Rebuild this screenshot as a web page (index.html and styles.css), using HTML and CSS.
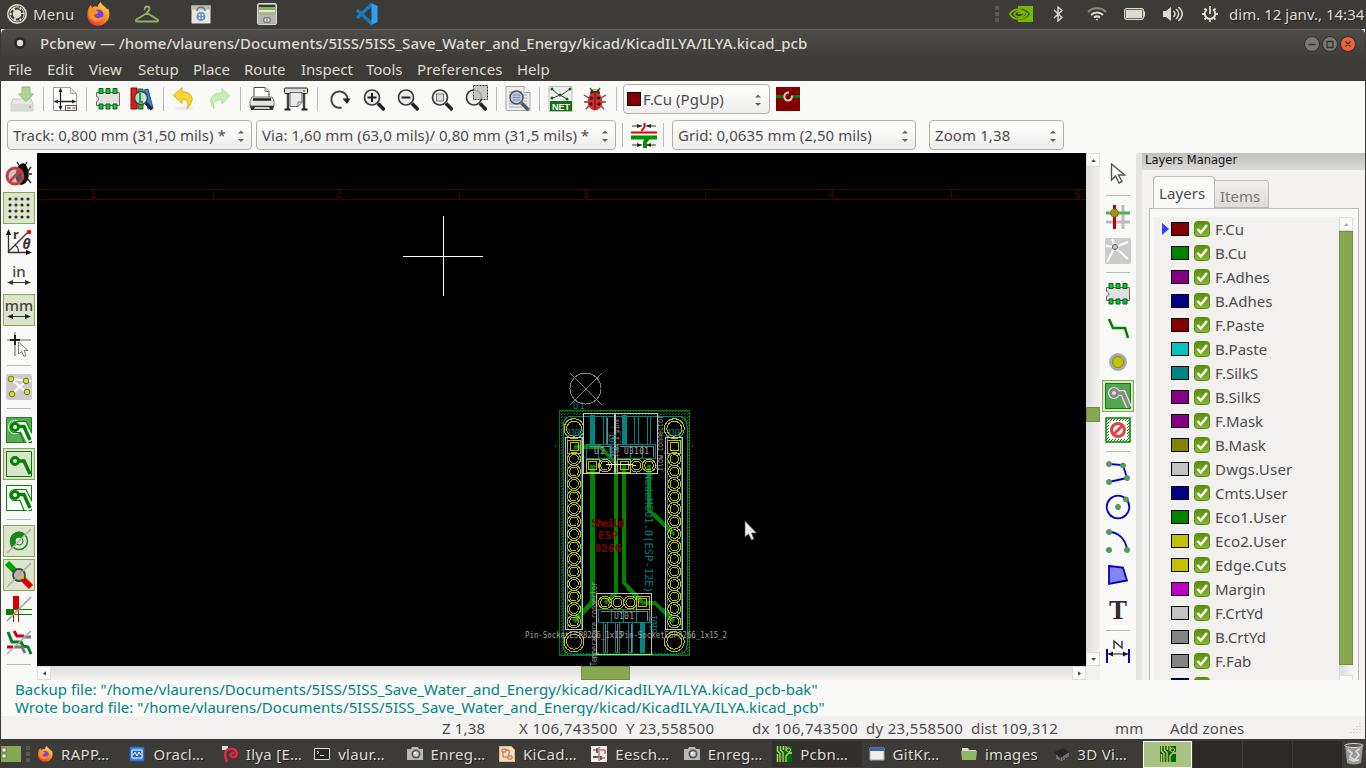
FILE: index.html
```html
<!DOCTYPE html>
<html lang="en">
<head>
<meta charset="utf-8">
<title>Pcbnew</title>
<link rel="stylesheet" href="styles.css">
</head>
<body>
<svg class="defs" width="0" height="0">
  <defs>
    <linearGradient id="ff" x1="0.8" y1="0" x2="0.2" y2="1"><stop offset="0" stop-color="#ffe14a"/><stop offset=".5" stop-color="#ff8a1e"/><stop offset="1" stop-color="#f0264e"/></linearGradient>
    <linearGradient id="ck" x1="0" y1="0" x2="0" y2="1"><stop offset="0" stop-color="#5a900c"/><stop offset="1" stop-color="#86b835"/></linearGradient>
    <pattern id="hatch" width="3" height="3" patternUnits="userSpaceOnUse"><path d="M0 3L3 0" stroke="#008400" stroke-width="1"/></pattern>
    <pattern id="dots" width="3" height="3" patternUnits="userSpaceOnUse"><rect width="1" height="1" fill="#008400"/><rect x="1" y="2" width="1" height="1" fill="#008400"/></pattern>
    <symbol id="firefox" viewBox="0 0 24 24"><path d="M2 8C3 5 4 4 5 3l1 3c2-2 4-2 6-1 0-2 1-4 3-5 0 3 4 4 6 7 1 1 1 0 1-1 3 7 1 13-4 16-5 3-12 2-15-3C1 16 1 12 2 8z" fill="url(#ff)"/><circle cx="12.500" cy="12.500" r="5" fill="#7542e5"/><path d="M3 9c3-2 5-1 8 0 2 1 1 3-1 3l-2 1c1 4 6 4 9 1-1 5-7 8-11 4-3-2-4-6-3-9z" fill="#ff9320"/></symbol>
    <symbol id="check" viewBox="0 0 16 16"><rect x=".5" y=".5" width="15" height="15" rx="3" fill="url(#ck)" stroke="#578a12"/><path d="M3.500 8l3.300 3.500L13 4" fill="none" stroke="#fff" stroke-width="2.400"/></symbol>
    <symbol id="lens" viewBox="0 0 24 24"><circle cx="11" cy="10.500" r="7.500" fill="#ececec" stroke="#3c3c3c" stroke-width="1.700"/><path d="M17 16.500l6.500 6.500" stroke="#222" stroke-width="3.600"/></symbol>
    <symbol id="chip" viewBox="0 0 24 24"><path d="M.500 5.500h23v13H.500v-4c3-1 3-4 0-5z" fill="#e0e0e0" stroke="#666"/><g fill="#0c3" stroke="#175417"><path d="M3 1.500h4v5H3zM10 1.500h4v5h-4zM17 1.500h4v5h-4zM3 17h4v5H3zM10 17h4v5h-4zM17 17h4v5h-4z"/></g></symbol>
    <symbol id="camera" viewBox="0 0 16 16"><path d="M0 3h4l1-2h6l1 2h4v11H0z" fill="#b9b9b5"/><circle cx="9" cy="8" r="4.500" fill="#555"/><circle cx="9" cy="8" r="2.800" fill="#c6cfd5"/><circle cx="8" cy="7" r="1" fill="#fff"/></symbol>
    <symbol id="pcb" viewBox="0 0 16 16"><path d="M0 0h16v16H0z" fill="#056b05"/><path d="M1.500 0v5L4 7.500V16M4.500 0v4L7 6.500V16M7.500 0v4M1.500 8v8M10 16v-6l3-3h3M10 0v5" fill="none" stroke="#d5c18d" stroke-width="1.300"/><circle cx="12.500" cy="4" r="2" fill="none" stroke="#d5c18d"/></symbol>
    <symbol id="zone" viewBox="0 0 26 26"><path d="M8 9h9l8 15" fill="none" stroke="#fff" stroke-width="9"/><circle cx="9" cy="10" r="7" fill="#fff"/><path d="M9 15.500c-7 0-7-11 0-11h11l6 12M9 15.500h5l4 9.500" fill="none" stroke="#008400" stroke-width="1.200"/><circle cx="9" cy="10" r="3.500" fill="none" stroke="#008400" stroke-width="3"/><path d="M12 9.500h6L24 23" fill="none" stroke="#008400" stroke-width="3.500"/></symbol>
    <symbol id="arrow" viewBox="0 0 16 22"><path d="M1.500 1v16l4-4 3.500 7 3-1.500L8.500 12h6z" fill="#fff" stroke="#555" stroke-width="1.400"/></symbol>
    <symbol id="spin" viewBox="0 0 8 12"><path d="M1 3.500L4 .500 7 3.500zM1 9L4 12 7 9z" fill="#666"/></symbol>
    <g id="pad" fill="none" stroke="#c2c200" stroke-width="1"><circle r="6.500"/><circle r="4.300"/></g>
    <g id="sq" fill="none" stroke="#c2c200" stroke-width="1"><path d="M-6.500-6.500h13v13h-13zM-4-4h8v8h-8z"/></g>
    <g id="hole" fill="none" stroke="#c2c200" stroke-width="1"><circle r="10"/><circle r="7.500"/></g>
    <g id="column">
      <path d="M-7 -9V182M7.500 -9V182" stroke="#008484"/><rect x="-8.500" y="-9" width="17" height="192" fill="none" stroke="#c2c2c2"/>
      <use href="#sq"/><use href="#pad" y="12.500"/><use href="#pad" y="25"/><use href="#pad" y="37.500"/><use href="#pad" y="50"/><use href="#pad" y="62.500"/><use href="#pad" y="75"/><use href="#pad" y="87.500"/><use href="#pad" y="100"/><use href="#pad" y="112.500"/><use href="#pad" y="125"/><use href="#pad" y="137.500"/><use href="#pad" y="150"/><use href="#pad" y="162.500"/><use href="#pad" y="175"/>
    </g>
  </defs>
</svg>

<header class="panel">
  <svg class="p-ubuntu" viewBox="0 0 20 20"><circle cx="10" cy="10" r="10" fill="#dfdbd2"/><circle cx="10" cy="10" r="5.500" fill="none" stroke="#3c3b37" stroke-width="2.200" stroke-dasharray="9.500 2"/><circle cx="10" cy="10" r="8" fill="none" stroke="#3c3b37" stroke-width=".7"/><g fill="#dfdbd2" stroke="#3c3b37" stroke-width=".8"><circle cx="3.500" cy="10" r="1.700"/><circle cx="13.500" cy="4.300" r="1.700"/><circle cx="13.500" cy="15.700" r="1.700"/></g></svg>
  <span class="p-menu">Menu</span>
  <svg class="p-ff"><use href="#firefox"/></svg>
  <svg class="p-hanger" viewBox="0 0 24 18"><path d="M9.500 5c0-5 5-4 5-1 0 2-2.500 2-2.500 4L1.500 14.500c-1 1-.5 2 .5 2h20c1 0 1.500-1 .5-2L12 8" fill="none" stroke="#93b066" stroke-width="1.800"/></svg>
  <svg class="p-bag" viewBox="0 0 20 20"><path d="M.500 1.500h19v18H.500z" fill="#e6e5e2"/><path d="M.500 1.500h19v4H.500z" fill="#bbb9b4"/><path d="M6 7c0-5 8-5 8 0" fill="none" stroke="#777" stroke-width="1.500"/><circle cx="10" cy="12.500" r="4.500" fill="#6695c8"/><g fill="#e6e5e2"><circle cx="8.500" cy="11" r="1"/><circle cx="11.500" cy="11" r="1"/><circle cx="8.500" cy="14" r="1"/><circle cx="11.500" cy="14" r="1"/></g></svg>
  <svg class="p-cab" viewBox="0 0 20 22"><rect x=".5" y=".5" width="19" height="21" rx="1.500" fill="#a4a5a0" stroke="#d8d8d5"/><path d="M2 2h16v9H2z" fill="#30362a"/><path d="M2 4h16v3H2z" fill="#87b158"/><path d="M2 7h16v2H2z" fill="#e2e8d6"/><path d="M2 9h16v2H2z" fill="#9dbf78"/><path d="M1 11.500h18v9H1z" fill="#b5b5b1"/><path d="M7 15h6v4H7z" fill="#fff" stroke="#555"/><path d="M9 16.500h2v1H9z" fill="#333"/></svg>
  <svg class="p-code" viewBox="0 0 22 22"><path d="M1 15L16 1M1 7l15 14" stroke="#147cc4" stroke-width="3.200"/><path d="M15.500 0l6 3v16l-6 3z" fill="#2ba0ee"/></svg>
  <span class="grow"></span>
  <svg class="p-dots" viewBox="0 0 4 16"><path d="M0 0h4v4H0zM0 6h4v4H0zM0 12h4v4H0z" fill="#595855"/></svg>
  <svg class="p-nv" viewBox="0 0 24 16"><path d="M9 0h15v16H9z" fill="#76b900"/><path d="M9 3c5-1 9 1 12 5-3 4-7 6-12 6z" fill="#3c3b37"/><path d="M.800 8C4 3.500 8 2.500 12 4c3 1 5 2.500 6.500 4-3.500 5.500-13 7.500-17.700 0zM5 8c3-4 8-3.500 10.500 0-3 4-8 4-10.500 0zM9 8c1.500-2 3-1 4 0" fill="none" stroke="#76b900" stroke-width="1.700"/></svg>
  <svg class="p-bt" viewBox="0 0 10 16"><path d="M1 4l8 7.500L5 15V1l4 3.500L1 12" fill="none" stroke="#dfdbd2" stroke-width="1.400"/></svg>
  <svg class="p-wifi" viewBox="0 0 20 14"><g fill="none" stroke-width="2"><path d="M1 5c5-5 13-5 18 0" stroke="#8b8983"/><path d="M4 8c3.500-3.500 8.500-3.500 12 0" stroke="#dfdbd2"/><path d="M7 10.500c2-1.500 4-1.500 6 0" stroke="#dfdbd2"/></g><path d="M8.500 12h3L10 13.800z" fill="#dfdbd2"/></svg>
  <svg class="p-bat" viewBox="0 0 22 12"><rect x=".7" y=".7" width="18.600" height="10.600" rx="2" fill="none" stroke="#dfdbd2" stroke-width="1.200"/><path d="M2 2h16v8H2z" fill="#dfdbd2"/><path d="M20.500 3.500v5" stroke="#dfdbd2"/></svg>
  <svg class="p-vol" viewBox="0 0 20 16"><path d="M0 5h3l5-4v14l-5-4H0z" fill="#dfdbd2"/><g fill="none" stroke="#dfdbd2" stroke-width="1.500"><path d="M10.500 5c2 2 2 4 0 6M13 3c3.500 3 3.500 7 0 10M15.500 1c5 4.500 5 9.500 0 14"/></g></svg>
  <svg class="p-pow" viewBox="0 0 16 16"><path d="M5 3.500a5.200 5.200 0 1 0 6 0" fill="none" stroke="#dfdbd2" stroke-width="2"/><path d="M8 0v8M0 8h3M13 8h3M2.500 13.500l2-2M13.500 13.500l-2-2M8 14v2M2.500 2.500l2 2M13.500 2.500l-2 2" stroke="#dfdbd2" stroke-width="1.800"/></svg>
  <span class="p-clock">dim. 12 janv., 14:34</span>
</header>

<main class="window">
  <div class="titlebar">
    <svg class="t-dot" viewBox="0 0 12 12"><circle cx="6" cy="6" r="6" fill="#2b2a27"/><circle cx="6" cy="6" r="3.200" fill="#dfdbd2"/></svg>
    <span class="t-text">Pcbnew — /home/vlaurens/Documents/5ISS/5ISS_Save_Water_and_Energy/kicad/KicadILYA/ILYA.kicad_pcb</span>
    <svg class="t-btns" viewBox="0 0 52 16"><g stroke="#2e2d2a"><circle cx="8" cy="8" r="7.500" fill="#7a7973"/><circle cx="26" cy="8" r="7.500" fill="#7a7973"/><circle cx="44" cy="8" r="7.500" fill="#ee6334"/></g><path d="M4.500 8.500h7M23 5.500h6v6h-6zM41.500 5.500l5 5m0-5l-5 5" fill="none" stroke="#33322f" stroke-width="1.300"/></svg>
  </div>
  <nav class="menubar"><span class="m1">File</span><span class="m2">Edit</span><span class="m3">View</span><span class="m4">Setup</span><span class="m5">Place</span><span class="m6">Route</span><span class="m7">Inspect</span><span class="m8">Tools</span><span class="m9">Preferences</span><span>Help</span></nav>

  <div class="tools-top">
    <div class="cell"><svg viewBox="0 0 24 24"><path d="M3 12L1 17v7h22v-7l-2-5z" fill="#e8e8e6" stroke="#c9c9c7"/><path d="M1 17h22v6H1z" fill="#d9dad8"/><path d="M12 0h8v7h3.500L16 14.500 8.500 7H12z" fill="#b0d493" stroke="#8fba75"/><circle cx="20" cy="20" r="1" fill="#7c6"/></svg></div><i class="sep"></i>
    <div class="cell"><svg viewBox="0 0 24 24"><path d="M.500.500h17l6 6v17H.500z" fill="#fff" stroke="#999"/><path d="M17.500.500v6h6" fill="#ddd" stroke="#aaa"/><path d="M7.500 1.500v21M1.500 14.500h21" stroke="#222" stroke-width="1.300"/><path d="M7.500 1l-2 4h4zM7.500 23l-2-4h4zM1 14.500l4-2v4zM23 14.500l-4-2v4z" fill="#222"/><path d="M12.500 18.500h11v5h-11z" fill="#fff" stroke="#644"/><path d="M14 21h4m1.500 0h3" stroke="#333"/></svg></div><i class="sep"></i>
    <div class="cell"><svg><use href="#chip"/></svg></div>
    <div class="cell"><svg viewBox="0 0 24 24"><path d="M1 1h6v21H1z" fill="#e01b1b" stroke="#900"/><path d="M8 2h5v20H8z" fill="#28a745" stroke="#176b2c"/><path d="M14 3l4-1 5 19-5 1z" fill="#3a7fe0" stroke="#2255aa"/><circle cx="11" cy="11" r="6.500" fill="#c9e7e5" fill-opacity=".85" stroke="#444" stroke-width="1.500"/><path d="M10 6v9h3" stroke="#2a9a43" fill="none" stroke-width="2"/><path d="M16 16l6 6.500" stroke="#222" stroke-width="3.300"/></svg></div><i class="sep"></i>
    <div class="cell"><svg viewBox="0 0 24 24"><ellipse cx="11" cy="21.500" rx="10" ry="2" fill="#ececec"/><path d="M.500 8.500L9 .500V5c10-1 14 8 5 16.500 2.500-7 0-10-5-9v4z" fill="#fbd535" stroke="#d9ac12"/></svg></div>
    <div class="cell"><svg viewBox="0 0 24 24"><path d="M22.500 9L15 1.500V6C5 6 0 12 7 21.500 5 15 9 12 15 13v4z" fill="#c5efb4" stroke="#a8dc94"/></svg></div><i class="sep"></i>
    <div class="cell"><svg viewBox="0 0 24 24"><path d="M4 11V.500h11l4 4V11" fill="#fff" stroke="#444"/><path d="M15 .500v4h4" fill="#ddd" stroke="#777"/><path d="M2 10h20l2 4v5H0v-5z" fill="#e4e4e2" stroke="#777"/><path d="M3 12.500h18" stroke="#222" stroke-width="2.500"/><path d="M0 19h24l-1 4H1z" fill="#333"/><path d="M5 20h14l1 2H4z" fill="#ccc"/></svg></div>
    <div class="cell"><svg viewBox="0 0 24 24"><path d="M4 4v19M20 4v19" stroke="#444" stroke-width="2.500"/><path d="M.500 22.500h6M17.500 22.500h6" stroke="#222" stroke-width="2"/><rect x=".5" y="1" width="23" height="5.500" rx="1" fill="#ddd" stroke="#222"/><path d="M6 5.500h12v10l-4 4H6z" fill="#ebebeb" stroke="#666"/><path d="M18 15h-4v5" fill="none" stroke="#777"/><path d="M19 3h2v2h-2z" fill="#4c0"/></svg></div><i class="sep"></i>
    <div class="cell"><svg viewBox="0 0 24 24"><path d="M14 20.500a8.200 8.200 0 1 1 6-8" transform="translate(.7 0)" fill="none" stroke="#444" stroke-width="2"/><path d="M15.500 11.500h8L20 17z" fill="#222"/></svg></div>
    <div class="cell"><svg viewBox="0 0 24 24"><use href="#lens" width="24" height="24"/><path d="M6.500 10.500h9M11 6v9" stroke="#222" stroke-width="2"/></svg></div>
    <div class="cell"><svg viewBox="0 0 24 24"><use href="#lens" width="24" height="24"/><path d="M6.500 10.500h9" stroke="#222" stroke-width="2"/></svg></div>
    <div class="cell"><svg viewBox="0 0 24 24"><use href="#lens" width="24" height="24"/><path d="M7.500 7h7v7h-7z" fill="#ddd" stroke="#777"/></svg></div>
    <div class="cell"><svg viewBox="0 0 24 24"><use href="#lens" width="24" height="24"/><path d="M10.500-1.500h14v14h-14z" fill="#bbb" fill-opacity=".8" stroke="#222" stroke-dasharray="2 1"/></svg></div><i class="sep"></i>
    <div class="cell"><svg viewBox="0 0 24 24"><path d="M0-.500h18l6 6v18H0z" fill="#eee" stroke="#aaa"/><path d="M18-.500v6h6" fill="#fff" stroke="#aaa"/><path d="M3 5h13M3 8h18M3 11h18M3 14h18M3 17h18M3 20h16" stroke="#aaa"/><circle cx="10.500" cy="10.500" r="6.500" fill="#b9c9e2" stroke="#555" stroke-width="1.500"/><path d="M7 8h7M7 10.500h7M7 13h7" stroke="#7790b5"/><path d="M15.500 16l7 7" stroke="#4a5668" stroke-width="3.300"/></svg></div><i class="sep"></i>
    <div class="cell"><svg viewBox="0 0 24 24"><path d="M0-.500h23v25H0z" fill="#eee" stroke="#bbb"/><path d="M3 2l8 7 10-7M3 11h1l7-3 7 4" fill="none" stroke="#444"/><g fill="#060"><circle cx="3" cy="2" r="1.500"/><circle cx="21" cy="2" r="1.500"/><circle cx="11" cy="8" r="1.500"/><circle cx="3" cy="11" r="1.500"/><circle cx="18" cy="12" r="1.500"/></g><path d="M1 14h22v10H1z" fill="#137013"/><text x="12" y="22.500" class="net">NET</text></svg></div>
    <div class="cell"><svg viewBox="0 0 24 24"><path d="M7 1l3 4M17 1l-3 4M1 8l5 3M23 8l-5 3M1 15h5M23 15h-5M3 22l4-4M21 22l-4-4" stroke="#544" stroke-width="1.300" fill="none"/><ellipse cx="12" cy="6" rx="5" ry="4" fill="#333"/><path d="M10 2h4v2h-4z" fill="#e8c520"/><ellipse cx="12" cy="14.500" rx="7.500" ry="9" fill="#d92c2c"/><path d="M12 6v17" stroke="#611"/><g fill="#222"><circle cx="8.500" cy="11" r="1.700"/><circle cx="15.500" cy="11" r="1.700"/><circle cx="8" cy="17" r="1.700"/><circle cx="16" cy="17" r="1.700"/></g></svg></div><i class="sep"></i>
    <div class="combo c-layer"><b class="sw"></b><span>F.Cu (PgUp)</span><svg class="spin"><use href="#spin"/></svg></div>
    <svg class="pair" viewBox="0 0 24 24"><path d="M0 0h24v24H0z" fill="#840000"/><path d="M0 9.500h24" stroke="#008400" stroke-width="3"/><path d="M8 5h9v9H8z" fill="#840000"/><path d="M13 5.500c-6 0-6 8-1 8 3 0 4-2 4-5" fill="none" stroke="#ccc" stroke-width="2"/></svg>
  </div>
  <div class="tools-second">
    <div class="combo c-track"><span>Track: 0,800 mm (31,50 mils) *</span><svg class="spin"><use href="#spin"/></svg></div>
    <div class="combo c-via"><span>Via: 1,60 mm (63,0 mils)/ 0,80 mm (31,5 mils) *</span><svg class="spin"><use href="#spin"/></svg></div>
    <i class="sep"></i>
    <svg class="width-icon" viewBox="0 0 26 26"><path d="M1 4h10M15 4h10M1 23h10M15 23h10" stroke="#333"/><path d="M6 2l5 2-5 2zM20 2l-5 2 5 2zM6 21l5 2-5 2zM20 21l-5 2 5 2z" fill="#222"/><path d="M13.500 1v4l-3 4" fill="none" stroke="#d00" stroke-width="2"/><path d="M0 10.500h26" stroke="#e00000" stroke-width="2"/><path d="M0 15.500h26" stroke="#009000" stroke-width="4"/><path d="M17 16l-3 4v6" fill="none" stroke="#009000" stroke-width="4"/></svg>
    <i class="sep"></i>
    <div class="combo c-grid"><span>Grid: 0,0635 mm (2,50 mils)</span><svg class="spin"><use href="#spin"/></svg></div>
    <div class="combo c-zoom"><span>Zoom 1,38</span><svg class="spin"><use href="#spin"/></svg></div>
  </div>

  <div class="workspace">
    <aside class="side">
      <div class="cell"><svg viewBox="0 0 26 26"><path d="M11 1l3 5M21 1l-3 5M25 6l-3 4M25 22l-4-5M23 13h3" stroke="#222" stroke-width="1.300"/><path d="M12 6c3-5 7-5 9 0 4 8 1 17-6 18-6-2-7-10-3-18z" fill="#000"/><circle cx="9" cy="15" r="8" fill="#999" fill-opacity=".55" stroke="#c93d40" stroke-width="2.800"/><path d="M4 20L15 9" stroke="#c93d40" stroke-width="2.800"/></svg></div>
      <div class="cell on"><svg viewBox="0 0 26 26"><path d="M4 4h20M4 10h20M4 16h20M4 22h20" stroke="#333" stroke-width="3.200" stroke-linecap="round" stroke-dasharray="0 6"/></svg></div>
      <div class="cell"><svg viewBox="0 0 26 26"><path d="M2.500 23.500V3M2 23.500h22M2 23L22 3M9 16c3 2 4 5 3 8" fill="none" stroke="#333" stroke-width="1.300"/><path d="M2.500 0L0 6h5zM26 23.500l-6-2.500v5z" fill="#111"/><circle cx="23" cy="3" r="2.200" fill="red"/><text x="7" y="10" class="polar">r</text><text x="16.500" y="19.500" class="polar it">θ</text></svg></div>
      <div class="cell"><svg viewBox="0 0 26 26"><text x="13" y="14" class="unit">in</text><path d="M2 19.500h22" stroke="#333"/><path d="M1 19.500l6-2.500v5zM25 19.500l-6-2.500v5z" fill="#333"/></svg></div>
      <div class="cell on"><svg viewBox="0 0 26 26"><text x="13" y="14" class="unit">mm</text><path d="M2 19.500h22" stroke="#333"/><path d="M1 19.500l6-2.500v5zM25 19.500l-6-2.500v5z" fill="#222"/></svg></div>
      <div class="cell"><svg viewBox="0 0 26 26"><path d="M1 9h24M9 1v24" stroke="#999" stroke-width="1.600"/><path d="M4 9h10M9 4v10" stroke="#222" stroke-width="2"/><path d="M12.500 11v12l3-2.500 2.500 5 2-1-2-5h4z" fill="#fff" stroke="#777"/></svg></div>
      <i class="hsep"></i>
      <div class="cell"><svg viewBox="0 0 26 26"><rect width="26" height="26" rx="2" fill="#ccc"/><path d="M5 5l15 13M20 7L6 20M5 5l20 2" stroke="#fff" stroke-width="2.200"/><g fill="#dbe800" stroke="#666"><circle cx="5" cy="5" r="2.800"/><circle cx="20" cy="7" r="2.800"/><circle cx="6" cy="20" r="2.800"/><circle cx="21" cy="18" r="2.800"/></g></svg></div>
      <i class="hsep"></i>
      <div class="cell"><svg viewBox="0 0 26 26"><path d="M.500.500h25v25H.500z" fill="#58aa58" stroke="#1d861d"/><use href="#zone" width="26" height="26"/></svg></div>
      <div class="cell on"><svg viewBox="0 0 26 26"><path d="M.500.500h25v25H.500z" fill="none" stroke="#008400"/><path d="M12 10h6l6 13" fill="none" stroke="#008400" stroke-width="3.500"/><circle cx="9" cy="10" r="3.500" fill="none" stroke="#008400" stroke-width="3"/></svg></div>
      <div class="cell"><svg viewBox="0 0 26 26"><path d="M.500.500h25v25H.500z" fill="#fff" stroke="#008400"/><use href="#zone" width="26" height="26"/></svg></div>
      <i class="hsep"></i>
      <div class="cell on"><svg viewBox="0 0 26 26"><circle cx="13" cy="13" r="8.500" fill="none" stroke="#1a861a" stroke-width="1.500"/><path d="M4 13a9 9 0 0 1 15-7l-6 7-7 7q-2-3-2-7z" fill="#1a861a"/><circle cx="13" cy="13" r="4" fill="#dce6cb" stroke="#1a861a"/><path d="M1 25L25 1" stroke="#aaa" stroke-width="1.500"/></svg></div>
      <div class="cell on"><svg viewBox="0 0 26 26"><path d="M1 1l10 10" stroke="#00a000" stroke-width="6"/><path d="M15 15l10 10" stroke="#d80000" stroke-width="6"/><circle cx="13" cy="13" r="6" fill="#b8b8ac" stroke="#444" stroke-width="1.800"/><path d="M13 16l5-4v5z" fill="#db0"/><path d="M1 25L25 1" stroke="#aaa" stroke-width="1.300"/></svg></div>
      <div class="cell"><svg viewBox="0 0 26 26"><path d="M7 0h6v13H7z" fill="#d80000"/><path d="M0 13h7v6H0z" fill="#008400"/><path d="M7.500 13v13M12.500 13v13" stroke="#d80000"/><path d="M7 13.500h19M7 18.500h19" stroke="#008400"/><path d="M1 25L25 1" stroke="#999" stroke-width="1.500"/></svg></div>
      <div class="cell"><svg viewBox="0 0 26 26"><path d="M2 2l4 10h9l2 4 5 1 3 7" fill="none" stroke="#008020" stroke-width="3"/><path d="M8 1l3 5h7" fill="none" stroke="#d00020" stroke-width="3"/><path d="M17 7h8M8 17h8l3 6" fill="none" stroke="#777" stroke-width="2.800"/><path d="M1 17h6" stroke="#d00020" stroke-width="3"/><path d="M1 24L25 1" stroke="#aaa" stroke-width="1.400"/></svg></div>
      <i class="hsep"></i>
    </aside>

    <section class="board">
      <svg class="canvas" viewBox="37 153 1049 513">
        <g shape-rendering="crispEdges">
        <path d="M37 153h1049v513H37z" fill="#000"/>
        <path d="M37 189.500h1049M37 199.500h1049M213.500 189v10M459.500 189v10M705.500 189v10M951.500 189v10" stroke="#480000"/>
        <path d="M403 256.500h80M443.500 216v80" stroke="#fff"/>
        <g fill="none" stroke="#848484"><circle cx="585.500" cy="388.500" r="15.500"/><path d="M570 373l32 32M602 373l-32 32"/></g>
        <path d="M559.500 410.500h130v245h-130z" fill="none" stroke="#008400"/>
        <path d="M560 411h129v244H560zM564 424v224l8 5h106l8-5V424l-8-7H572z" fill="url(#dots)" fill-rule="evenodd"/>
        <path d="M572 416h106q9 1 9 10v219q0 9-9 9H572q-9 0-9-9V426q0-9 9-10z" fill="none" stroke="#008484"/>
        <g fill="none" stroke="#008400" stroke-width="4"><path d="M574 446.500h25.500L616 463v130l-11 10"/><path d="M592.500 465v137L574 621.500" stroke-width="5"/><path d="M624 465v118l19 20h12l19 18.500"/><path d="M649 465v45l25.500 24.500"/></g>
        <use href="#hole" x="574" y="428.700"/><use href="#hole" x="674.300" y="428.700"/><use href="#hole" x="574" y="641.700"/><use href="#hole" x="674.300" y="641.700"/>
        <use href="#column" x="574" y="446.500"/><use href="#column" x="674.300" y="446.500"/>
        <g fill="none" stroke="#008484"><path d="M586.500 444.500h25v14h-25zM598.500 444v14M617.500 444.500h38v14h-38zM630.500 444v14M642.500 444v14M603.500 416v28M606.500 416v28M634.500 416v28M638.500 416v28M647.500 416v28M650.500 416v28"/><path d="M592.500 415v30M624 415v30" stroke-width="5"/><path d="M598.500 609.500h51v13h-51zM611.500 609v13M623.500 609v13M636.500 609v13M603.500 622v30h4v-30M615.500 622v30h4v-30M628.500 622v30h4v-30"/><path d="M642.500 622v31" stroke-width="5"/></g>
        <g fill="none" stroke="#848484"><path d="M588.500 446.500h22v10M619.500 446.500h34v10M607.500 418v26M600.500 611.500h47v9M605.500 624v28M617.500 624v28M631.500 624v28"/></g>
        <g fill="none" stroke="#c2c2c2"><path d="M583.500 413.500h74v60h-74zM596.500 593.500h55v61h-55z"/><path d="M615 413v60" stroke-width="2"/></g>
        <use href="#sq" x="592.500" y="465.500"/><use href="#pad" x="605" y="465.500"/><use href="#sq" x="624" y="465.500"/><use href="#pad" x="636.500" y="465.500"/><use href="#pad" x="649" y="465.500"/>
        <use href="#pad" x="605" y="602.500"/><use href="#pad" x="617.500" y="602.500"/><use href="#pad" x="630.300" y="602.500"/><use href="#sq" x="642.500" y="602.500"/>
        <path d="M606 464.500h24l6 1" stroke="#fff" fill="none"/>
        </g>
        <g class="ruler"><text x="93" y="198">1</text><text x="339" y="198">2</text><text x="585.500" y="198">3</text><text x="831" y="198">4</text><text x="1077.500" y="198">5</text></g>
        <g class="teal"><text x="573" y="409" textLength="12">U1</text><text x="566" y="436" textLength="18">J102</text><text x="666" y="436" textLength="18">J103</text><text transform="translate(616 456) rotate(-90)" textLength="23">U3101</text><text transform="translate(657 634) rotate(-90)" textLength="19">U101</text><text class="big" transform="translate(645 473) rotate(90)" textLength="120" lengthAdjust="spacingAndGlyphs">NodeMCU1.0(ESP-12E)</text><text x="553" y="452">'</text><text x="690" y="452">'</text></g>
        <g class="red"><text x="608" y="527" textLength="33">Sheild</text><text x="608" y="539" textLength="20">ESP</text><text x="608" y="552" textLength="27">8266</text></g>
        <g class="gray"><text x="594" y="454" textLength="11">U2</text><text x="624" y="454" textLength="25">U3101</text><text x="614" y="619" textLength="20">U101</text><text x="525" y="638" textLength="98" lengthAdjust="spacingAndGlyphs">Pin-SocketESP8266_1x15</text><text x="620" y="638" textLength="107" lengthAdjust="spacingAndGlyphs">Pin-SocketESP8266_1x15_2</text><text transform="translate(597 666) rotate(-90)" textLength="84" lengthAdjust="spacingAndGlyphs">Temperature_connector</text><text transform="translate(663 471) rotate(-90)" textLength="56" lengthAdjust="spacingAndGlyphs">flow_connector</text><text transform="translate(619 457) rotate(-90)" textLength="38" lengthAdjust="spacingAndGlyphs">flex_2_pins</text></g>
        <path d="M745 521v16l3.500-3 3 6 2.500-1-2.500-6h5z" fill="#eee" stroke="#555" stroke-width=".7"/>
      </svg>
      <div class="vbar"><i class="btn"><svg viewBox="0 0 6 4"><path d="M0 4L3 0l3 4z"/></svg></i><b class="thumb"></b><i class="btn"><svg viewBox="0 0 6 4"><path d="M0 0l3 4 3-4z"/></svg></i></div>
      <div class="hbar"><i class="btn"><svg viewBox="0 0 4 6"><path d="M4 0L0 3l4 3z"/></svg></i><b class="thumb"></b><i class="btn"><svg viewBox="0 0 4 6"><path d="M0 0l4 3-4 3z"/></svg></i></div>
    </section>

    <aside class="side right">
      <div class="cell"><svg class="cursor"><use href="#arrow"/></svg></div>
      <i class="hsep"></i>
      <div class="cell"><svg viewBox="0 0 26 26"><path d="M18 1v24M1 18h24" stroke="#bbb" stroke-width="3"/><path d="M9.500 1v24" stroke="#c00000" stroke-width="3"/><path d="M1 9h24" stroke="#54ab54" stroke-width="3"/><circle cx="9.500" cy="9" r="4" fill="#a88d1c" stroke="#8b761a"/></svg></div>
      <div class="cell"><svg viewBox="0 0 26 26"><rect width="26" height="26" rx="2" fill="#ccc"/><path d="M10 9L2 24M10 9l13 12M10 9l13-5M10 9L7 1M10 9L1 8" stroke="#fff" stroke-width="2"/><circle cx="10" cy="9" r="2.500" fill="#ccc" stroke="#555"/></svg></div>
      <i class="hsep"></i>
      <div class="cell"><svg viewBox="-1 -1 26 26"><use href="#chip" width="24" height="24"/></svg></div>
      <div class="cell"><svg viewBox="0 0 26 26"><path d="M4 4l4 9h12l3 10" fill="none" stroke="#008400" stroke-width="2.600"/></svg></div>
      <div class="cell"><svg viewBox="0 0 26 26"><circle cx="13" cy="13" r="9" fill="#aaa"/><circle cx="13" cy="13" r="5.500" fill="#c2c200" stroke="#888420"/></svg></div>
      <div class="cell on"><svg viewBox="0 0 26 26"><path d="M.500.500h25v25H.500z" fill="#54a454" stroke="#008400"/><path d="M9 10h9l6 14" fill="none" stroke="#e8e8e8" stroke-width="6"/><circle cx="9" cy="10" r="6" fill="#e8e8e8"/><path d="M9 10h9l6 14" fill="none" stroke="#888" stroke-width="3.500"/><circle cx="9" cy="10" r="3.500" fill="#ddd" stroke="#888" stroke-width="2.800"/></svg></div>
      <div class="cell"><svg viewBox="0 0 26 26"><path d="M0 0h26v26H0z" fill="#fff"/><path d="M1 1h24v24H1z" fill="url(#hatch)" stroke="#008400" stroke-width="1.500"/><path d="M4 4h18v18H4z" fill="#fff"/><circle cx="13" cy="13" r="6.500" fill="#eee" stroke="#db4346" stroke-width="3"/><path d="M9 17l8-8" stroke="#db4346" stroke-width="3"/></svg></div>
      <i class="hsep"></i>
      <div class="cell"><svg viewBox="0 0 26 26"><path d="M4 4l14 1 4 13-18 4" fill="none" stroke="#0000c8" stroke-width="1.800"/><g fill="#2cba3c" stroke="#777"><circle cx="4" cy="4" r="2.500"/><circle cx="18" cy="5.500" r="2.500"/><circle cx="22" cy="18" r="2.500"/><circle cx="4" cy="22" r="2.500"/></g></svg></div>
      <div class="cell"><svg viewBox="0 0 26 26"><circle cx="13" cy="13" r="11.300" fill="none" stroke="#0000c8" stroke-width="1.800"/><g fill="#2cba3c" stroke="#777"><circle cx="13" cy="13" r="2.500"/><circle cx="21" cy="5.500" r="2.500"/></g></svg></div>
      <div class="cell"><svg viewBox="0 0 26 26"><path d="M4 4c9 0 17 7 18 18" fill="none" stroke="#0000c8" stroke-width="1.800"/><g fill="#2cba3c" stroke="#777"><circle cx="4" cy="4" r="2.500"/><circle cx="22" cy="22" r="2.500"/><circle cx="4" cy="22" r="2.500"/></g></svg></div>
      <div class="cell"><svg viewBox="0 0 26 26"><path d="M4 4l14 1.500 4 13L4 22z" fill="#8484f4" stroke="#0000c0" stroke-width="1.800"/></svg></div>
      <div class="cell"><svg viewBox="0 0 26 26"><text x="13" y="22.500" class="serif">T</text></svg></div>
      <i class="hsep"></i>
      <div class="cell"><svg viewBox="0 0 26 26"><path d="M2 10v14M24 10v14" stroke="#0000c8" stroke-width="2"/><path d="M3 15h20" stroke="#111"/><path d="M3 15l5-2.500v5zM23 15l-5-2.500v5z" fill="#111"/><path d="M9 10V2l8 7V2" fill="none" stroke="#333" stroke-width="1.400"/></svg></div>
    </aside>
    <div class="sash"></div>

    <aside class="manager">
      <h2>Layers Manager</h2>
      <div class="tabs"><span class="tab active">Layers</span><span class="tab">Items</span></div>
      <div class="frame">
        <ul class="rows">
          <li><svg class="ptr" viewBox="0 0 7 12"><path d="M0 0l7 6-7 6z" fill="#3c3cff"/></svg><b class="l-red"></b><svg class="ck"><use href="#check"/></svg>F.Cu</li>
          <li><b class="l-green"></b><svg class="ck"><use href="#check"/></svg>B.Cu</li>
          <li><b class="l-purple"></b><svg class="ck"><use href="#check"/></svg>F.Adhes</li>
          <li><b class="l-navy"></b><svg class="ck"><use href="#check"/></svg>B.Adhes</li>
          <li><b class="l-red"></b><svg class="ck"><use href="#check"/></svg>F.Paste</li>
          <li><b class="l-cyan"></b><svg class="ck"><use href="#check"/></svg>B.Paste</li>
          <li><b class="l-teal"></b><svg class="ck"><use href="#check"/></svg>F.SilkS</li>
          <li><b class="l-purple"></b><svg class="ck"><use href="#check"/></svg>B.SilkS</li>
          <li><b class="l-purple"></b><svg class="ck"><use href="#check"/></svg>F.Mask</li>
          <li><b class="l-olive"></b><svg class="ck"><use href="#check"/></svg>B.Mask</li>
          <li class="wide"><b class="l-light"></b><svg class="ck"><use href="#check"/></svg>Dwgs.User</li>
          <li><b class="l-navy"></b><svg class="ck"><use href="#check"/></svg>Cmts.User</li>
          <li class="wide"><b class="l-green"></b><svg class="ck"><use href="#check"/></svg>Eco1.User</li>
          <li class="wide"><b class="l-yellow"></b><svg class="ck"><use href="#check"/></svg>Eco2.User</li>
          <li class="wide"><b class="l-yellow"></b><svg class="ck"><use href="#check"/></svg>Edge.Cuts</li>
          <li><b class="l-magenta"></b><svg class="ck"><use href="#check"/></svg>Margin</li>
          <li><b class="l-light"></b><svg class="ck"><use href="#check"/></svg>F.CrtYd</li>
          <li><b class="l-gray"></b><svg class="ck"><use href="#check"/></svg>B.CrtYd</li>
          <li><b class="l-gray"></b><svg class="ck"><use href="#check"/></svg>F.Fab</li>
          <li><b class="l-navy"></b><svg class="ck"><use href="#check"/></svg>B.Fab</li>
        </ul>
        <div class="lbar"><i class="btn"><svg viewBox="0 0 6 4"><path d="M0 4L3 0l3 4z" fill="#aaa"/></svg></i><b class="thumb"></b><i class="btn"><svg viewBox="0 0 6 4"><path d="M0 0l3 4 3-4z"/></svg></i></div>
      </div>
    </aside>
  </div>

  <div class="messages"><p class="msg1">Backup file: "/home/vlaurens/Documents/5ISS/5ISS_Save_Water_and_Energy/kicad/KicadILYA/ILYA.kicad_pcb-bak"</p><p class="msg2">Wrote board file: "/home/vlaurens/Documents/5ISS/5ISS_Save_Water_and_Energy/kicad/KicadILYA/ILYA.kicad_pcb"</p></div>
  <div class="status"><span class="s1">Z 1,38</span><span class="s2">X 106,743500</span><span class="s3">Y 23,558500</span><span class="s4">dx 106,743500</span><span class="s5">dy 23,558500</span><span class="s6">dist 109,312</span><span class="s7">mm</span><span class="s8">Add zones</span><svg class="grip" viewBox="0 0 12 12"><path d="M10 1v10M7 4v7M4 7v4M1 10v1" stroke="#bbb" stroke-dasharray="1 2"/></svg></div>
</main>

<footer class="taskbar">
  <svg class="desk" viewBox="0 0 20 16"><path d="M0 0h20v16H0z" fill="#87a752"/><path d="M1 2h4v4H1zM1 8h4v4H1z" fill="#fff" stroke="#617a3c"/></svg>
  <svg class="tdots" viewBox="0 0 4 16"><path d="M0 0h4v4H0zM0 6h4v4H0zM0 12h4v4H0z" fill="#595855"/></svg>
  <div class="tasks">
  <div class="task"><svg><use href="#firefox"/></svg>RAPP…</div>
  <div class="task"><svg viewBox="0 0 16 16"><path d="M1 1h14v14H1z" fill="#3a85ea" stroke="#205bb0"/><path d="M3 4h10v8H3z" fill="#2d68c2" stroke="#fff"/><path d="M4 9l2-3 2 4 2-4 2 3" fill="none" stroke="#fff"/></svg>Oracl…</div>
  <div class="task"><svg viewBox="0 0 16 16"><path d="M0 0h6v4H0z" fill="#ddd"/><path d="M5 16C2 9 3 3 8 3c6-1 8 4 6 7-3 3-6 0-5-2 2-2 3-1 3 0" fill="none" stroke="#e5264a" stroke-width="2.500"/></svg>Ilya [E…</div>
  <div class="task"><svg viewBox="0 0 16 16"><path d="M.500 2.500h15v11H.500z" fill="#252823" stroke="#ddd"/><path d="M3 5l2 1.500L3 8M6 9.500h4" fill="none" stroke="#fff"/></svg>vlaur…</div>
  <div class="task"><svg><use href="#camera"/></svg>Enreg…</div>
  <div class="task"><svg viewBox="0 0 16 16"><path d="M0 0h12l4 4v12H0z" fill="#efe0c8" stroke="#caa023"/><path d="M3 3h4v3H3zM9 10h4v3H9zM4 6v5h5M7 4h3v6" fill="none" stroke="#cb5b3b"/></svg>KiCad…</div>
  <div class="task"><svg viewBox="0 0 16 16"><path d="M0 0h16v16H0z" fill="#eee"/><path d="M2 4h4M9 4h5v4M8 1v14M2 11h6M9 12h5" fill="none" stroke="#c22"/><path d="M6 2v5M10 10v4M2 11h5" fill="none" stroke="#153" stroke-width="1.500"/></svg>Eesch…</div>
  <div class="task"><svg><use href="#camera"/></svg>Enreg…</div>
  <div class="task active"><svg><use href="#pcb"/></svg>Pcbn…</div>
  <div class="task"><svg viewBox="0 0 16 16"><path d="M1 2h14v12H1z" fill="#eee" stroke="#aaa"/><path d="M1 2h14v3H1z" fill="#346bb5"/></svg>GitKr…</div>
  <div class="task"><svg viewBox="0 0 16 16"><path d="M1 2h6l1 2h7v4H1z" fill="#ddd"/><path d="M0 5h16l-1 9H1z" fill="#91b764"/></svg>images</div>
  <div class="task"><svg viewBox="0 0 16 16"><path d="M4 9v4M6 10v4M8.500 11v4M11 9v5M13 8v4M15 7v4" stroke="#888" stroke-width="1.300"/><path d="M1 6l9-4 6 4-9 6z" fill="#252627"/></svg>3D Vi…</div>
  </div>
  <div class="pager"><i class="cur"><svg><use href="#pcb"/></svg></i><i></i><i></i><i></i></div>
  <svg class="trash" viewBox="0 0 20 22"><path d="M1 2h18l-2 18q-7 3-14 0z" fill="#999"/><ellipse cx="10" cy="2.500" rx="9" ry="2" fill="#555" stroke="#ddd"/><path d="M4 7l4 3-2 4 5 3 4-5-3-4 4-2M5 16l4 2 6-1" fill="none" stroke="#ddd" stroke-width="1.600"/></svg>
</footer>
</body>
</html>
```
FILE: styles.css
```css
* { box-sizing: border-box; }
body { margin: 0; width: 1366px; height: 768px; overflow: hidden; display: flex; flex-direction: column; background: #3c3b37; font: 15px/18px "Noto Sans", sans-serif; color: #4c4c4c; }
svg { display: block; flex: none; }
i, b { display: block; flex: none; }
p, h2, ul { margin: 0; padding: 0; font: inherit; }
span { white-space: nowrap; }
.defs { position: absolute; }
.grow { flex: 1; }

.panel { height: 29px; padding-bottom: 2px; display: flex; align-items: center; color: #dfdbd2; flex: none; text-shadow: 1px 1px #222; }
.p-ubuntu { width: 20px; height: 20px; margin-left: 7px; }
.p-menu { margin-left: 6px; width: 53px; letter-spacing: .2px; }
.p-ff { width: 24px; height: 24px; }
.p-hanger { width: 24px; height: 18px; margin-left: 25px; }
.p-bag { width: 20px; height: 20px; margin-left: 32px; }
.p-cab { width: 20px; height: 22px; margin-left: 46px; }
.p-code { width: 22px; height: 22px; margin-left: 79px; }
.p-dots { width: 4px; height: 16px; }
.p-nv { width: 24px; height: 16px; margin-left: 10px; }
.p-bt { width: 10px; height: 16px; margin-left: 20px; }
.p-wifi { width: 20px; height: 14px; margin-left: 24px; }
.p-bat { width: 22px; height: 12px; margin-left: 17px; }
.p-vol { width: 20px; height: 16px; margin-left: 17px; }
.p-pow { width: 16px; height: 16px; margin-left: 19px; }
.p-clock { width: 137px; margin-left: 11px; letter-spacing: .02px; }

.window { height: 711px; flex: none; display: flex; flex-direction: column; border: solid #3c3b37; border-width: 0 1px 1px; background: #f9f9f8; }
.titlebar { height: 29px; padding-bottom: 3px; flex: none; display: flex; align-items: center; border-top: 1px solid #62615c; border-radius: 5px 5px 0 0; background: linear-gradient(#4d4c48, #3e3d39); color: #dfdbd2; font-weight: 500; }
.t-dot { width: 12px; height: 12px; margin: 1px 14px 0 13px; }
.t-text { flex: 1; letter-spacing: .06px; }
.t-btns { width: 52px; height: 16px; margin: 2px 9px 0 0; }
.menubar { height: 23px; padding: 0 0 2px 7px; flex: none; display: flex; align-items: center; background: #3c3b37; color: #dfdbd2; }
.m1 { width: 39px; } .m2 { width: 42px; } .m3 { width: 49px; } .m4 { width: 55px; } .m5 { width: 51px; } .m6 { width: 57px; } .m7 { width: 65px; } .m8 { width: 51px; } .m9 { width: 100px; letter-spacing: .2px; }

.tools-top { height: 37px; flex: none; display: flex; align-items: center; padding: 0 0 2px 4px; }
.cell { width: 34px; height: 34px; flex: none; display: flex; align-items: center; justify-content: center; }
.cell svg { width: 24px; height: 24px; overflow: visible; }
.sep { width: 1px; height: 24px; margin: 0 4px; background: #bbb; }
.net { font: bold 9px "Liberation Sans", sans-serif; fill: #fff; text-anchor: middle; }
.combo { height: 30px; display: flex; align-items: center; border: 1px solid #b2aeaa; border-radius: 4px; background: linear-gradient(#fff, #eeedec); padding: 0 5px; letter-spacing: .04px; }
.combo span { flex: 1; }
.spin { width: 8px; height: 12px; margin-top: 2px; }
.c-layer { width: 147px; margin-left: 2px; padding: 0 7px 0 3px; }
.sw { width: 14px; height: 14px; border: 1px solid #000; background: #840000; margin-right: 2px; }
.pair { width: 24px; height: 24px; margin-left: 6px; }
.tools-second { height: 35px; flex: none; display: flex; align-items: center; padding: 0 0 1px 6px; }
.c-track { width: 245px; padding-right: 6px; }
.c-via { width: 360px; margin-left: 4px; padding-right: 6px; }
.tools-second .sep { margin: 0 4px 0 6px; }
.width-icon { width: 26px; height: 26px; margin-left: 4px; }
.c-grid { width: 244px; margin-left: 4px; padding-right: 6px; letter-spacing: .05px; }
.c-zoom { width: 135px; margin-left: 13px; padding-right: 6px; letter-spacing: .1px; }

.workspace { height: 527px; flex: none; display: flex; overflow: hidden; }
.side { width: 36px; flex: none; padding: 4px 0 0 1px; display: flex; flex-direction: column; }
.side .cell svg { width: 26px; height: 26px; }
.side .cell.on { width: 32px; height: 32px; margin: 1px; border: 1px solid #87a556; background: #dce4cb; }
.side .cell .cursor { width: 16px; height: 22px; }
.hsep { width: 24px; height: 1px; margin: 4px 5px; background: #b8b8b6; }
.polar { font: bold 13px "Noto Sans", sans-serif; fill: #433; }
.it { font-style: italic; font-size: 14px; }
.unit { font: 500 15px "Noto Sans", sans-serif; fill: #444; text-anchor: middle; }
.serif { font: bold 27px "Liberation Serif", serif; fill: #2c2c2c; text-anchor: middle; }

.board { width: 1063px; flex: none; display: grid; grid-template-columns: 1049px 14px; grid-template-rows: 513px 14px; background: #f2f1f0; }
.canvas { width: 1049px; height: 513px; }
.ruler text { font: 10px "DejaVu Sans Mono", monospace; fill: #580000; text-anchor: middle; }
.teal text { font: 9px "DejaVu Sans Mono", monospace; fill: #008484; }
.teal .big { font-size: 11px; }
.red text { font: bold 11px "DejaVu Sans Mono", monospace; fill: #840000; text-anchor: middle; }
.gray text { font: 8px "DejaVu Sans Mono", monospace; fill: #a4a4a4; }
.vbar, .lbar { width: 14px; display: flex; flex-direction: column; background: linear-gradient(90deg, #dfdddb, #f4f3f2); }
.hbar { height: 14px; display: flex; background: linear-gradient(#dfdddb, #f4f3f2); }
.btn { width: 14px; height: 14px; display: flex; align-items: center; justify-content: center; border: 1px solid #ddd; background: #fafafa; }
.btn svg { width: 5px; height: 3px; fill: #444; }
.hbar .btn svg { width: 3px; height: 5px; }
.thumb { background: #87a752; border: 1px solid #728e45; }
.vbar .thumb { height: 15px; margin: 240px 0 230px; }
.hbar .thumb { width: 49px; margin: 0 442px 0 530px; }
.sash { width: 6px; flex: none; background: #e4e4e3; }

.manager { width: 223px; display: flex; flex-direction: column; background: #f3f2f1; }
.manager h2 { height: 17px; flex: none; padding-left: 3px; font: 11.500px/15px "DejaVu Sans", sans-serif; color: #111; background: linear-gradient(#bfbfbd, #dbdbd9); }
.tabs { height: 38px; flex: none; display: flex; align-items: flex-end; padding-left: 11px; }
.tab { width: 54px; height: 28px; line-height: 31px; padding-left: 5px; border: 1px solid #bbb; border-left: 0; border-radius: 0 4px 0 0; color: #7a7a78; background: linear-gradient(#f2f1f0, #dddbd9); }
.tab.active { width: 62px; height: 32px; line-height: 32px; border-left: 1px solid #bbb; border-bottom: 0; border-radius: 4px 4px 0 0; background: #f9f9f8; color: #4c4c4c; letter-spacing: .1px; }
.frame { width: 210px; height: 472px; margin-left: 7px; flex: none; display: flex; padding: 8px 5px 0 4px; border: solid #bbb; border-width: 1px 1px 0; background: #f8f8f7; }
.rows { flex: 1; list-style: none; background: #f2f1f0; }
.rows li { height: 24px; display: flex; align-items: center; padding-left: 8px; }
.rows .wide { letter-spacing: .2px; }
.rows b { width: 18px; height: 14px; border: 1px solid #000; margin: 0 5px 0 9px; }
.rows .ptr { width: 7px; height: 12px; }
.rows .ptr + b { margin-left: 2px; }
.ck { width: 16px; height: 16px; margin-right: 5px; }
.l-red { background: #840000; } .l-green { background: #008400; } .l-purple { background: #840084; } .l-navy { background: #000084; } .l-cyan { background: #00c2c2; } .l-teal { background: #008484; } .l-olive { background: #848400; } .l-light { background: #c2c2c2; } .l-yellow { background: #c2c200; } .l-magenta { background: #c200c2; } .l-gray { background: #848484; }
.lbar .thumb { height: 434px; }
.lbar .thumb + .btn { margin-top: 10px; }

.messages { height: 36px; flex: none; padding: 0 0 0 14px; color: #008484; white-space: nowrap; }
.msg1 { letter-spacing: .035px; } .msg2 { letter-spacing: .045px; }
.status { height: 23px; flex: none; display: flex; align-items: center; padding: 1px 3px 0 441px; background: #f2f1f0; letter-spacing: .15px; }
.s1 { width: 77px; } .s2 { width: 107px; letter-spacing: .4px; } .s3 { width: 126px; letter-spacing: .3px; } .s4 { width: 114px; letter-spacing: .3px; } .s5 { width: 105px; letter-spacing: .3px; } .s6 { width: 144px; } .s7 { width: 55px; } .s8 { flex: 1; }
.grip { width: 12px; height: 12px; }

.taskbar { height: 28px; flex: none; display: flex; align-items: center; color: #dfdbd2; }
.desk { width: 20px; height: 16px; margin-left: 1px; }
.tdots { width: 4px; height: 16px; margin: 0 7px 0 5px; }
.tasks { width: 1106px; height: 28px; display: flex; align-items: center; }
.task { width: 92.400px; height: 26px; flex: none; display: flex; align-items: center; gap: 8px; white-space: nowrap; text-shadow: 1px 1px #222; letter-spacing: .3px; }
.task svg { width: 16px; height: 16px; }
.task.active { width: 90px; padding-left: 4px; margin: 0 6.400px 0 -4px; background: #31302d; }
.pager { display: flex; height: 27px; gap: 1px; }
.pager i { width: 49px; background: #2b2a28; }
.pager .cur { display: flex; align-items: center; justify-content: center; background: #a9c283; border: 1px solid #fff; }
.pager svg { width: 16px; height: 16px; }
.trash { width: 20px; height: 22px; margin-left: 2px; }
```
